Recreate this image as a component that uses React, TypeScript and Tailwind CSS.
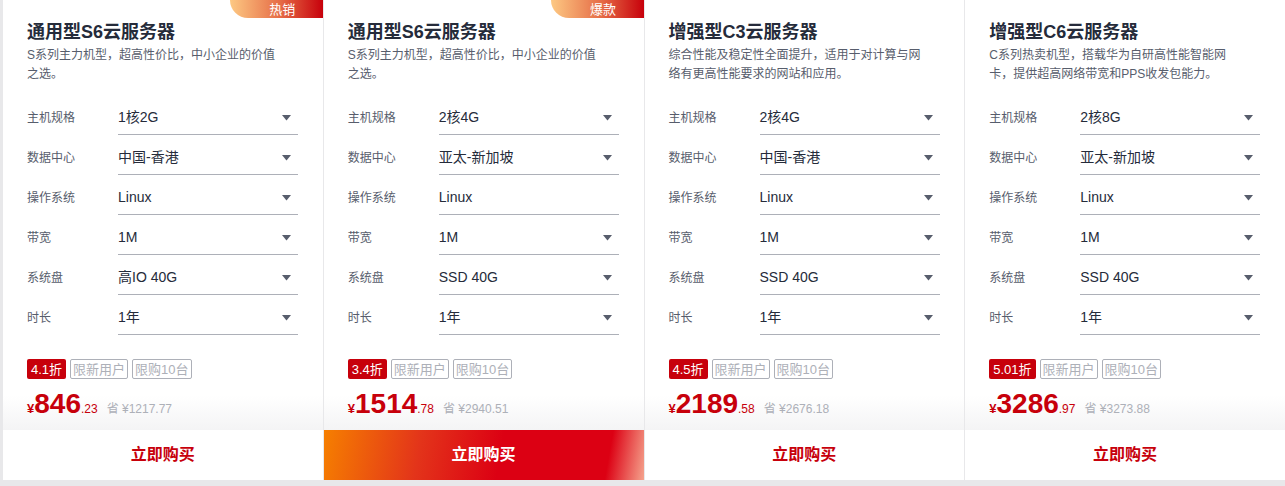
import React from 'react';

type Plan = {
  title: string;
  desc: string;
  badge?: string;
  spec: string;
  region: string;
  disk: string;
  discount: string;
  price: string;
  cents: string;
  save: string;
  featured?: boolean;
};

const plans: Plan[] = [
  {
    title: '通用型S6云服务器',
    desc: 'S系列主力机型，超高性价比，中小企业的价值之选。',
    badge: '热销',
    spec: '1核2G',
    region: '中国-香港',
    disk: '高IO 40G',
    discount: '4.1折',
    price: '846',
    cents: '.23',
    save: '¥1217.77',
  },
  {
    title: '通用型S6云服务器',
    desc: 'S系列主力机型，超高性价比，中小企业的价值之选。',
    badge: '爆款',
    spec: '2核4G',
    region: '亚太-新加坡',
    disk: 'SSD 40G',
    discount: '3.4折',
    price: '1514',
    cents: '.78',
    save: '¥2940.51',
    featured: true,
  },
  {
    title: '增强型C3云服务器',
    desc: '综合性能及稳定性全面提升，适用于对计算与网络有更高性能要求的网站和应用。',
    spec: '2核4G',
    region: '中国-香港',
    disk: 'SSD 40G',
    discount: '4.5折',
    price: '2189',
    cents: '.58',
    save: '¥2676.18',
  },
  {
    title: '增强型C6云服务器',
    desc: 'C系列热卖机型，搭载华为自研高性能智能网卡，提供超高网络带宽和PPS收发包能力。',
    spec: '2核8G',
    region: '亚太-新加坡',
    disk: 'SSD 40G',
    discount: '5.01折',
    price: '3286',
    cents: '.97',
    save: '¥3273.88',
  },
];

const font = { fontFamily: '"Liberation Sans", "Noto Sans CJK SC", sans-serif' };

const Caret = () => (
  <svg width="9" height="6" viewBox="0 0 9 6" className="shrink-0">
    <path d="M0 0h9L4.5 5.5z" fill="#575d6c" />
  </svg>
);

const SelectRow = ({ label, value, arrow = true }: { label: string; value: string; arrow?: boolean }) => (
  <div className="flex h-[34px] items-center">
    <span className="w-[91px] text-[12px] text-[#575d6c]">{label}</span>
    <div className="flex h-full w-[180px] items-center justify-between border-b border-[#adb0b8] pr-[7px]">
      <span className="text-[14px] text-[#252b3a]">{value}</span>
      {arrow && <Caret />}
    </div>
  </div>
);

const Card = ({ plan }: { plan: Plan }) => (
  <div className="relative flex h-[480px] flex-col bg-white">
    {plan.badge && (
      <div className="absolute right-0 top-0 flex h-[18px] w-[93px] items-center justify-center rounded-bl-[22px] bg-[linear-gradient(90deg,#fdc983,#e56a45_55%,#c7000b)] pl-3 text-[13px] leading-none text-white">
        {plan.badge}
      </div>
    )}
    <div className="flex flex-1 flex-col bg-gradient-to-b from-white from-[92%] to-[#f4f4f5] px-[24px] pt-[20px]">
      <h3 className="text-[18px] font-bold leading-[24px] text-[#252b3a]">{plan.title}</h3>
      <p className="mt-[2px] w-[252px] text-[12px] leading-[19px] text-[#575d6c]">{plan.desc}</p>
      <div className="mt-[17px] flex flex-col gap-[6px]">
        <SelectRow label="主机规格" value={plan.spec} />
        <SelectRow label="数据中心" value={plan.region} />
        <SelectRow label="操作系统" value="Linux" arrow={!plan.featured} />
        <SelectRow label="带宽" value="1M" />
        <SelectRow label="系统盘" value={plan.disk} />
        <SelectRow label="时长" value="1年" />
      </div>
      <div className="mt-[24px] flex gap-[4px] text-[13px] leading-none">
        <span className="flex h-[20px] items-center rounded-[2px] bg-[#c7000b] px-[4px] text-white">{plan.discount}</span>
        <span className="flex h-[20px] items-center rounded-[2px] border border-[#adb0b8] px-[2px] text-[#adb0b8]">限新用户</span>
        <span className="flex h-[20px] items-center rounded-[2px] border border-[#adb0b8] px-[2px] text-[#adb0b8]">限购10台</span>
      </div>
      <div className="mt-[11px] flex items-baseline leading-[28px]">
        <span className="text-[13px] font-bold text-[#c7000b]">¥</span>
        <span className="text-[28px] font-bold text-[#c7000b]">{plan.price}</span>
        <span className="text-[12px] text-[#c7000b]">{plan.cents}</span>
        <span className="ml-[9px] text-[12px] text-[#adb0b8]">省 {plan.save}</span>
      </div>
    </div>
    <button
      className={`h-[50px] text-[16px] font-bold ${
        plan.featured
          ? 'bg-[linear-gradient(100deg,#f67f00_0%,#e3341a_30%,#dc0013_55%,#dc0013_88%,#f5a38d_100%)] text-white'
          : 'bg-white text-[#c7000b]'
      }`}
    >
      立即购买
    </button>
  </div>
);

export default function App() {
  return (
    <div className="h-[486px] w-[1285px] bg-[#e8e8ea] pl-[3px]" style={font}>
      <div className="grid grid-cols-4 gap-px">
        {plans.map((p, i) => (
          <Card key={i} plan={p} />
        ))}
      </div>
    </div>
  );
}
